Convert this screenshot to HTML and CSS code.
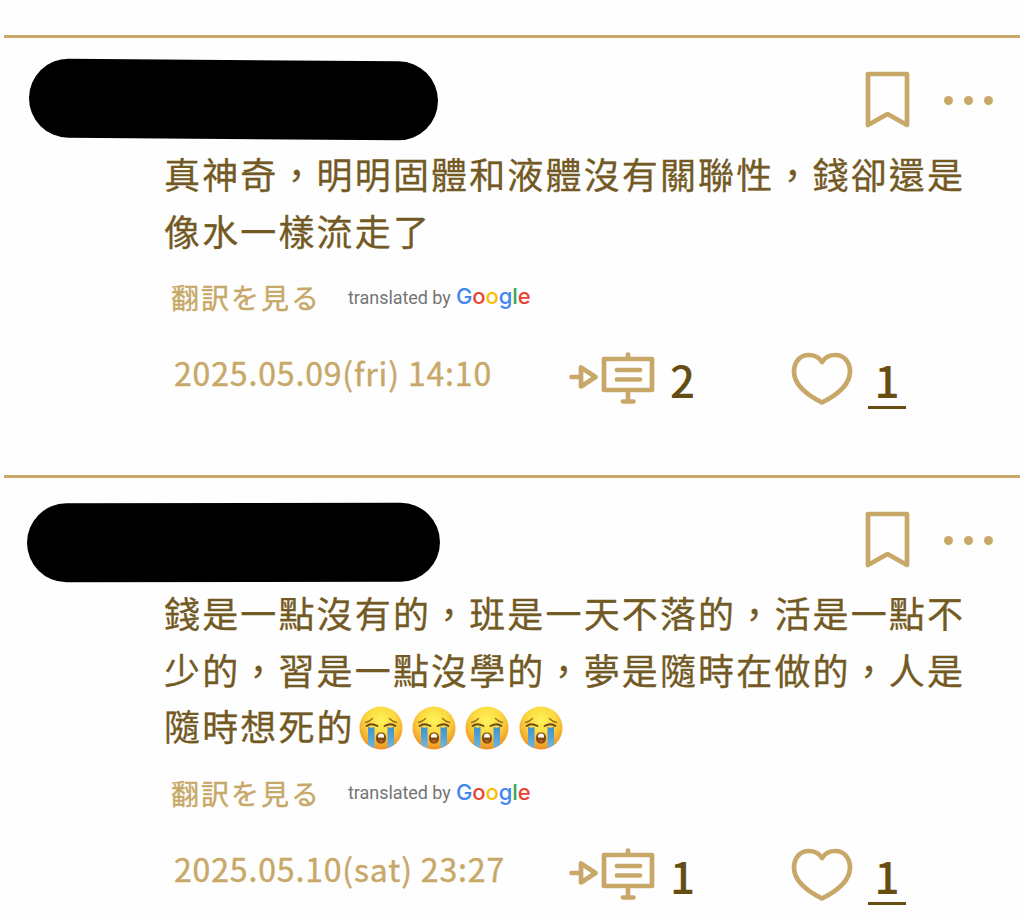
FILE: index.html
```html
<!DOCTYPE html>
<html lang="zh-Hant">
<head>
  <meta charset="UTF-8">
  <meta name="viewport" content="width=device-width, initial-scale=1.0">
  <title>Posts</title>
  <link rel="stylesheet" href="styles.css">
</head>
<body>

<!-- Shared icons -->
<svg class="sprite" width="0" height="0">
  <defs>
    <radialGradient id="face" cx="50%" cy="32%" r="68%">
      <stop offset="0" stop-color="#fff35a" />
      <stop offset="0.5" stop-color="#fbd83f" />
      <stop offset="1" stop-color="#ef8f22" />
    </radialGradient>
    <linearGradient id="tear" x1="0" y1="0" x2="0" y2="1">
      <stop offset="0" stop-color="#3f8fc8" />
      <stop offset="1" stop-color="#6cb8e6" />
    </linearGradient>
  </defs>
  <symbol id="bookmark" viewBox="0 0 46 58">
    <path d="M3 3H42V54L22.500 43L3 54Z" />
  </symbol>
  <symbol id="board" viewBox="0 0 86 54">
    <path d="M2.500 27H11M12 17.500V36.500L26.500 27ZM35 9H83V40H35ZM59 9V4.500M59 40V51M54 51.500H64.500M48 20H71M48 29.500H71" />
  </symbol>
  <symbol id="heart" viewBox="0 0 62 54">
    <path d="M31 10C27 3.500 21.500 3 17.500 3C8.500 3 3 11 3 19.500C3 33 17 43.500 31 50.500C45 43.500 59 33 59 19.500C59 11 53.500 3 44.500 3C40.500 3 35 3.500 31 10Z" />
  </symbol>
  <symbol id="sob" viewBox="0 0 44 44">
    <circle cx="22" cy="22" r="21.500" fill="url(#face)" />
    <path d="M9 20.500C11 22 13.500 22 15.500 21V42Q12 41 9 38.500ZM28.500 21C30.500 22 33 22 35 20.500V38.500Q32 41 28.500 42Z" fill="url(#tear)" />
    <path d="M7.500 20Q12 16.500 18.500 20M25.500 20Q32 16.500 36.500 20" fill="none" stroke="#6b4a16" stroke-width="1.900" stroke-linecap="round" />
    <path d="M6.500 16.500Q11 15.500 13.500 12.500M30.500 12.500Q33 15.500 37.500 16.500" fill="none" stroke="#a0701c" stroke-width="1.400" stroke-linecap="round" />
    <path d="M17 32C17 28.500 18.500 26.500 22 26.500S27 28.500 27 32S25.500 37.500 22 37.500S17 35.500 17 32Z" fill="#85480f" />
    <path d="M19 30Q19 27.500 22 27.500T25 30V31.500H19Z" fill="#fff" />
    <path d="M19.500 35Q22 33 24.500 35Q22 37.500 19.500 35Z" fill="#b9622f" />
  </symbol>
</svg>

<main class="timeline">
  <article class="post">
    <header class="post-header header-first">
      <div class="name name-first"></div>
      <div class="actions">
        <svg class="icon bookmark"><use href="#bookmark" /></svg>
        <div class="more"><i></i><i></i><i></i></div>
      </div>
    </header>
    <p class="text">真神奇，明明固體和液體沒有關聯性，錢卻還是<br>像水一樣流走了</p>
    <div class="translate">
      <span class="translate-link" lang="ja">翻訳を見る</span>
      <span class="by">translated by</span>
      <span class="google"><b class="blue">G</b><b class="red">o</b><b class="yellow">o</b><b class="blue">g</b><b class="green">l</b><b class="red">e</b></span>
    </div>
    <footer class="post-footer">
      <time class="date">2025.05.09(fri) 14:10</time>
      <svg class="icon board"><use href="#board" /></svg>
      <span class="count">2</span>
      <svg class="icon heart"><use href="#heart" /></svg>
      <span class="count likes">1</span>
    </footer>
  </article>

  <article class="post">
    <header class="post-header">
      <div class="name name-second"></div>
      <div class="actions">
        <svg class="icon bookmark"><use href="#bookmark" /></svg>
        <div class="more"><i></i><i></i><i></i></div>
      </div>
    </header>
    <p class="text">錢是一點沒有的，班是一天不落的，活是一點不<br>少的，習是一點沒學的，夢是隨時在做的，人是<br>隨時想死的<span class="emojis"><svg><use href="#sob" /></svg><svg><use href="#sob" /></svg><svg><use href="#sob" /></svg><svg><use href="#sob" /></svg></span></p>
    <div class="translate">
      <span class="translate-link" lang="ja">翻訳を見る</span>
      <span class="by">translated by</span>
      <span class="google"><b class="blue">G</b><b class="red">o</b><b class="yellow">o</b><b class="blue">g</b><b class="green">l</b><b class="red">e</b></span>
    </div>
    <footer class="post-footer">
      <time class="date">2025.05.10(sat) 23:27</time>
      <svg class="icon board"><use href="#board" /></svg>
      <span class="count">1</span>
      <svg class="icon heart"><use href="#heart" /></svg>
      <span class="count likes">1</span>
    </footer>
  </article>
</main>

</body>
</html>
```
FILE: styles.css
```css
* {
  box-sizing: border-box;
}

body {
  margin: 0;
  height: 918px;
  overflow: hidden;
  font-family: "Noto Sans CJK TC", sans-serif;
  background-color: #fefefe;
  color: #735a24;
}

.sprite {
  display: block;
}

.timeline {
  padding: 35px 4px 0;
}

.post {
  height: 440px;
  border-top: 3px solid #c8a868;
}

.post-header {
  display: flex;
  justify-content: space-between;
  height: 106px;
  padding-left: 23px;
}

.header-first {
  height: 107px;
}

.name {
  height: 79px;
  border-radius: 40px;
  background-color: #000;
}

.name-first {
  width: 409px;
  margin: 22px 0 0 2px;
  transform: rotate(0.45deg);
}

.name-second {
  width: 413px;
  margin-top: 25px;
  transform: rotate(-0.1deg);
}

.actions {
  display: flex;
  gap: 33px;
  padding: 33px 27px 0 0;
}

.more {
  display: flex;
  gap: 11px;
  padding-top: 25px;
}

.more i {
  width: 9px;
  height: 9px;
  border-radius: 50%;
  background-color: #c8a868;
}

.icon {
  flex: none;
  fill: none;
  stroke: #c8a868;
  stroke-width: 4.7px;
  stroke-linejoin: round;
  stroke-linecap: round;
}

.bookmark {
  width: 46px;
  height: 58px;
}

.board {
  width: 86px;
  height: 54px;
  margin-bottom: 4px;
}

.heart {
  width: 62px;
  height: 54px;
  margin-left: -1px;
}

.text {
  margin: 0 0 0 160px;
  font-size: 36px;
  line-height: 56.5px;
  letter-spacing: 2.15px;
  white-space: nowrap;
  -webkit-text-stroke: 0.3px currentColor;
}

.emojis {
  display: inline-flex;
  gap: 9.3px;
  margin-left: 4px;
  vertical-align: -9px;
}

.emojis svg {
  width: 44px;
  height: 44px;
}

.translate {
  display: flex;
  align-items: center;
  height: 40px;
  margin: 19px 0 0 167px;
}

.translate-link {
  width: 177px;
  font-family: "Noto Sans CJK JP", sans-serif;
  font-size: 28px;
  letter-spacing: 2px;
  color: #c8a868;
  -webkit-text-stroke: 0.4px currentColor;
}

.by {
  width: 108px;
  font-family: Roboto, sans-serif;
  font-size: 18px;
  letter-spacing: -0.05px;
  color: #757575;
}

.google {
  padding-bottom: 2px;
  font-family: Inter, sans-serif;
  font-size: 22px;
  letter-spacing: -0.1px;
}

.google b {
  font-weight: 500;
}

.blue {
  color: #4285f4;
}

.red {
  color: #ea4335;
}

.yellow {
  color: #fbbc05;
}

.green {
  color: #34a853;
}

.post-footer {
  display: grid;
  grid-template-columns: 395px 101px 122px 76px 38px;
  align-items: center;
  height: 60px;
  margin: 32px 0 0 170px;
}

.date {
  padding-bottom: 14px;
  font-size: 32px;
  letter-spacing: 0.85px;
  white-space: nowrap;
  color: #c8a868;
  -webkit-text-stroke: 0.4px currentColor;
}

.count {
  font-size: 44px;
  font-weight: 500;
  line-height: 58px;
  color: #664d14;
}

.likes {
  height: 60px;
  border-bottom: 3px solid #664d14;
  line-height: 60px;
  text-align: center;
}
```
